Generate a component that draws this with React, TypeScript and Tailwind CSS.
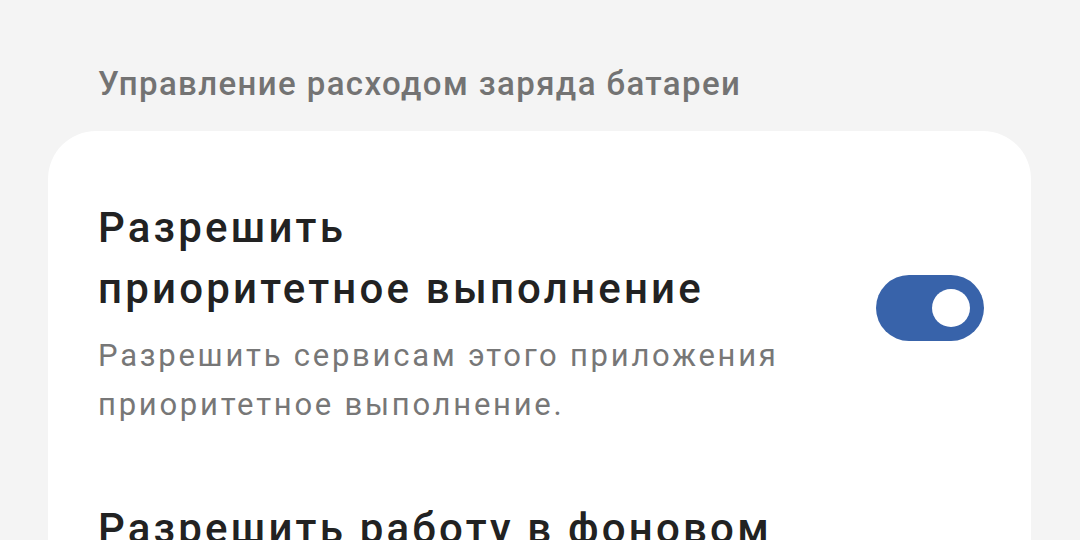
import React from "react";

const Toggle = () => (
  <div className="w-[108px] h-[66px] shrink-0 rounded-full bg-[#3863aa] flex items-center justify-end pr-[14px]">
    <div className="w-[38px] h-[38px] rounded-full bg-white" />
  </div>
);

export default function App() {
  return (
    <div
      className="w-[1080px] h-[540px] overflow-hidden bg-[#f4f4f4]"
      style={{ fontFamily: "Roboto, 'Noto Sans', sans-serif" }}
    >
      <div className="px-[98px] pt-[64px] h-[131px]">
        <h2 className="text-[33px] leading-[40px] tracking-[1.4px] text-[#737373] font-medium">
          Управление расходом заряда батареи
        </h2>
      </div>
      <div className="mx-[48px] w-[983px] bg-white rounded-[48px] pl-[50px] pr-[47px] pt-[66px] pb-10">
        <div className="flex items-start gap-6">
          <div className="flex-1">
            <div className="text-[42px] leading-[61px] tracking-[3.2px] text-[#222] font-medium">
              Разрешить
              <br />
              приоритетное выполнение
            </div>
            <div className="text-[31px] leading-[49px] tracking-[2.75px] text-[#777] mt-[12px]">
              Разрешить сервисам этого приложения
              <br />
              приоритетное выполнение.
            </div>
          </div>
          <div className="mt-[78px]">
            <Toggle />
          </div>
        </div>
        <div className="mt-[69px] text-[42px] leading-[61px] tracking-[3.2px] text-[#222] font-medium whitespace-nowrap">
          Разрешить работу в фоновом
        </div>
      </div>
    </div>
  );
}
